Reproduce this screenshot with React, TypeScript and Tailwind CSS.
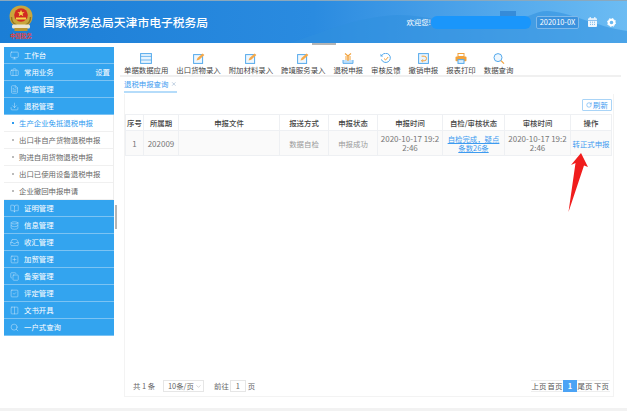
import { Monitor, Briefcase, FileText, Download, BookOpen, Database, Inbox, SquarePlus, Copy, SquareCheck, Columns2, Search, RotateCw, ChevronDown, X } from 'lucide-react';

const font = { fontFamily: '"Noto Sans CJK SC", "Liberation Sans", sans-serif' };

function Emblem() {
  return (
    <div className="flex w-[26px] flex-col items-center">
      <svg width="26" height="27" viewBox="0 0 26 27">
        <path d="M13 0.500c6.500 0 11.500 4.600 11.500 10.600 0 4.600-2 7.400-4.500 9.400H6c-2.500-2-4.500-4.800-4.500-9.400C1.500 5.100 6.500 0.500 13 0.500z" fill="#c9a63c" />
        <path d="M3.500 12c0 4 2.500 7 5 8M22.500 12c0 4-2.500 7-5 8" stroke="#8f7420" strokeWidth="1.400" fill="none" />
        <circle cx="13" cy="10" r="6.800" fill="#d22a22" />
        <path d="M13 4.800l1 2.500h2.600l-2.100 1.500.8 2.500-2.300-1.500-2.300 1.500.8-2.500-2.100-1.500H12z" fill="#f6d54a" />
        <rect x="8" y="12.500" width="10" height="2" fill="#f6d54a" />
        <rect x="4" y="19.500" width="18" height="4" rx="1.500" fill="#ece7d3" />
        <rect x="6.500" y="23" width="13" height="3" fill="#b9952f" />
      </svg>
      <span className="mt-[1px] whitespace-nowrap text-[5.500px] leading-[7px] font-bold text-[#e8413a]">中国税务</span>
    </div>
  );
}

function HeaderHills() {
  return (
    <svg className="absolute right-0 top-0 h-[43px] w-[340px]" viewBox="0 0 340 43" preserveAspectRatio="none">
      <path d="M0 43C40 30 70 16 110 14c40 0 60 14 90 12 30-2 45-16 60-16 20 0 50 16 80 20v13z" fill="#2f8fdf" opacity="0.55" />
      <rect x="213" y="10" width="16" height="10" fill="#2a7fd0" opacity="0.7" />
    </svg>
  );
}

function Header() {
  return (
    <div className="relative flex h-[43px] shrink-0 items-center overflow-hidden border-t border-[#8aa8bd] bg-gradient-to-r from-[#1b7ed6] via-[#2a8be0] to-[#6cbcf3]">
      <HeaderHills />
      <div className="relative ml-[8px] w-[35px]"><Emblem /></div>
      <div className="relative text-[11.800px] font-medium text-white">国家税务总局天津市电子税务局</div>
      <div className="relative ml-auto flex items-center pr-[11px]">
        <span className="text-[7.400px] text-white">欢迎您!</span>
        <div className="h-[13px] w-[100px] rounded-[6px] bg-[#1a96fb]" />
        <div className="ml-[5px] flex h-[13px] w-[43px] items-center justify-center rounded-[2px] border border-[#7fb9ea] bg-[#3a92de] text-[7.400px] text-white">202010-0X</div>
        <svg width="9" height="10" viewBox="0 0 9 10" className="ml-[9px]">
          <rect x="0" y="1.200" width="9" height="8.800" rx="1" fill="#eef6fd" />
          <path d="M2.200 0v2.400M6.800 0v2.400" stroke="#eef6fd" strokeWidth="1.200" />
          <path d="M0 3.400h9" stroke="#3a92de" strokeWidth="0.600" />
          <path d="M2 5.200h1M4 5.200h1M6 5.200h1M2 7.400h1M4 7.400h1M6 7.400h1" stroke="#6aaee6" strokeWidth="0.900" />
        </svg>
        <svg width="9" height="9" viewBox="0 0 9 9" className="ml-[10px]">
          <circle cx="4.500" cy="4.500" r="2.800" fill="none" stroke="#ffffff" strokeWidth="2" />
          <circle cx="4.500" cy="4.500" r="4.100" fill="none" stroke="#ffffff" strokeWidth="1" strokeDasharray="1.600 1.600" />
        </svg>
      </div>
    </div>
  );
}

const menuTop = [
  { icon: Monitor, label: '工作台' },
  { icon: Briefcase, label: '常用业务', extra: '设置' },
  { icon: FileText, label: '单据管理' },
  { icon: Download, label: '退税管理' },
];
const subItems = ['生产企业免抵退税申报', '出口非自产货物退税申报', '购进自用货物退税申报', '出口已使用设备退税申报', '企业撤回申报申请'];
const menuBottom = [
  { icon: BookOpen, label: '证明管理' },
  { icon: Database, label: '信息管理' },
  { icon: Inbox, label: '收汇管理' },
  { icon: SquarePlus, label: '加贸管理' },
  { icon: Copy, label: '备案管理' },
  { icon: SquareCheck, label: '评定管理' },
  { icon: Columns2, label: '文书开具' },
  { icon: Search, label: '一户式查询' },
];

function MenuRow({ icon: Icon, label, extra }: { icon: typeof Monitor; label: string; extra?: string }) {
  return (
    <div className="flex h-[17px] items-center border-b border-[#7cc3f3] bg-[#33a4ef] pl-[6px] pr-[4px] text-[7.400px] text-white">
      <Icon size={9} strokeWidth={1.200} className="text-[#d8eefc]" />
      <span className="ml-[5px]">{label}</span>
      {extra && <span className="ml-auto">{extra}</span>}
    </div>
  );
}

function Sidebar() {
  return (
    <div className="ml-[4px] mt-[4px] w-[110px] shrink-0">
      {menuTop.map((m) => <MenuRow key={m.label} {...m} />)}
      <div className="border-r border-[#eeeeee] bg-white">
        {subItems.map((s, i) => (
          <div key={s} className={`flex h-[17px] items-center border-b border-[#f0f0f0] pl-[8px] text-[7.400px] ${i === 0 ? 'text-[#2b9af0]' : 'text-[#666666]'}`}>
            <span className={`mr-[5px] h-[2px] w-[2px] ${i === 0 ? 'bg-[#2b9af0]' : 'bg-[#bbbbbb]'}`} />
            {s}
          </div>
        ))}
      </div>
      {menuBottom.map((m) => <MenuRow key={m.label} {...m} />)}
    </div>
  );
}

function ToolIcon({ kind }: { kind: number }) {
  if (kind === 0) return (
    <svg width="12" height="11" viewBox="0 0 12 11"><rect x="0.600" y="0.600" width="10.800" height="9.800" fill="#e8f4fe" stroke="#54a9ec" strokeWidth="1" /><path d="M0.600 3.400h10.800M0.600 7h10.800" stroke="#54a9ec" strokeWidth="0.800" /></svg>
  );
  if (kind === 1) return (
    <svg width="12" height="11" viewBox="0 0 12 11"><rect x="0.600" y="1.600" width="9" height="8.800" fill="#eef7fe" stroke="#54a9ec" strokeWidth="1" /><path d="M3.500 7.500l1-2.400L9.600 0.400l1.800 1.600-5.200 4.800z" fill="#f5a94a" /></svg>
  );
  if (kind === 2) return (
    <svg width="12" height="11" viewBox="0 0 12 11"><path d="M1 7v3.400h10V7" fill="#bfe0fa" stroke="#54a9ec" strokeWidth="0.900" /><path d="M3 0.500l3 2.500 3-2.500M3 4h6M3 6h6M6 3v5" stroke="#f2a23c" strokeWidth="1.100" fill="none" /></svg>
  );
  if (kind === 3) return (
    <svg width="12" height="11" viewBox="0 0 12 11"><path d="M2 2.200A4.600 4.600 0 1 1 1.400 6.400" stroke="#54a9ec" strokeWidth="1" fill="none" /><path d="M0.500 0.800v2.600h2.600" fill="#54a9ec" /><path d="M4 5.500l1.600 1.500L8.200 4" stroke="#f2a23c" strokeWidth="1" fill="none" /></svg>
  );
  if (kind === 4) return (
    <svg width="11" height="11" viewBox="0 0 11 11"><rect x="0.600" y="0.600" width="9.800" height="9.800" fill="#e8f4fe" stroke="#54a9ec" strokeWidth="1" /><path d="M3.600 3.200h2.600a2.200 2.200 0 0 1 0 4.600H3.600" stroke="#f2a23c" strokeWidth="1" fill="none" /><path d="M5 6.200L3.400 7.800 5 9.200" stroke="#f2a23c" strokeWidth="0.800" fill="none" /></svg>
  );
  if (kind === 5) return (
    <svg width="12" height="11" viewBox="0 0 12 11"><rect x="3" y="0.500" width="6" height="3" fill="#fff" stroke="#f2a23c" /><rect x="0.500" y="3.400" width="11" height="4.800" rx="1" fill="#f2a23c" /><rect x="3" y="6.600" width="6" height="3.800" fill="#d9eefd" stroke="#54a9ec" /></svg>
  );
  return (
    <svg width="12" height="11" viewBox="0 0 12 11"><circle cx="5" cy="4.600" r="4" fill="#eef7fe" stroke="#54a9ec" /><path d="M8 7.600l3 3" stroke="#f2a23c" strokeWidth="1.200" /></svg>
  );
}

const tools = [
  { label: '单据数据应用', kind: 0 },
  { label: '出口货物录入', kind: 1 },
  { label: '附加材料录入', kind: 1 },
  { label: '跨境服务录入', kind: 1 },
  { label: '退税申报', kind: 2 },
  { label: '审核反馈', kind: 3 },
  { label: '撤销申报', kind: 4 },
  { label: '报表打印', kind: 5 },
  { label: '数据查询', kind: 6 },
];

function Toolbar() {
  return (
    <div className="flex h-[34px] shrink-0 items-start gap-[8px] border-b-[2px] border-[#f0f0f0] pl-[4px] pt-[10px]">
      {tools.map((t) => (
        <div key={t.label} className="flex flex-col items-center">
          <ToolIcon kind={t.kind} />
          <span className="mt-[1px] whitespace-nowrap text-[7.400px] leading-[10px] text-[#444444]">{t.label}</span>
        </div>
      ))}
    </div>
  );
}

const cols = ['w-[18px]', 'w-[35px]', 'w-[101px]', 'w-[49px]', 'w-[49px]', 'w-[65px]', 'w-[62px]', 'w-[66px]', 'w-[41px]'];
const heads = ['序号', '所属期', '申报文件', '报送方式', '申报状态', '申报时间', '自检/审核状态', '审核时间', '操作'];

function ResultTable() {
  return (
    <table className="w-[486px] table-fixed border-collapse text-center text-[7.400px]">
      <colgroup>{cols.map((c, i) => <col key={i} className={c} />)}</colgroup>
      <thead>
        <tr className="h-[16px]">
          {heads.map((h) => <th key={h} className="border border-[#eef0f3] p-0 font-medium text-[#444444]">{h}</th>)}
        </tr>
      </thead>
      <tbody className="text-[#777777]">
        <tr className="h-[25px] bg-[#fafafa] leading-[9px]">
          <td className="border border-[#eef0f3] p-0 text-[8px]">1</td>
          <td className="border border-[#eef0f3] p-0 text-[8px]">202009</td>
          <td className="border border-[#eef0f3] p-0" />
          <td className="border border-[#eef0f3] p-0 text-[#999999]">数据自检</td>
          <td className="border border-[#eef0f3] p-0 text-[#999999]">申报成功</td>
          <td className="border border-[#eef0f3] p-0 whitespace-nowrap text-[8px]">2020-10-17 19:2<br />2:46</td>
          <td className="border border-[#eef0f3] p-0 text-[#3d9bf0] underline">自检完成，疑点<br />条数26条</td>
          <td className="border border-[#eef0f3] p-0 whitespace-nowrap text-[8px]">2020-10-17 19:2<br />2:46</td>
          <td className="border border-[#eef0f3] p-0 whitespace-nowrap text-[#3d9bf0]">转正式申报</td>
        </tr>
      </tbody>
    </table>
  );
}

function PageBtn({ label, className = '' }: { label: string; className?: string }) {
  return <span className={`flex h-[12px] items-center justify-center whitespace-nowrap border-y border-[#eeeeee] ${className}`}>{label}</span>;
}

function Pagination() {
  return (
    <div className="mt-auto flex h-[20px] items-center pl-[8px] pr-[3px] text-[7.400px] text-[#666666]">
      <span className="w-[24px] whitespace-pre">共 1 条</span>
      <div className="ml-[6px] flex h-[12px] w-[41px] items-center justify-between whitespace-nowrap border border-[#e6e6e6] pl-[4px] pr-[1px]">
        <span>10条/页</span>
        <ChevronDown size={7} className="text-[#bbbbbb]" />
      </div>
      <span className="ml-[10px]">前往</span>
      <div className="ml-[1px] flex h-[12px] w-[16px] items-center justify-center border border-[#e6e6e6]">1</div>
      <span className="ml-[2px]">页</span>
      <div className="ml-auto flex h-[12px] items-center text-[#555555]">
        <PageBtn label="上页" className="w-[16px]" />
        <PageBtn label="首页" className="w-[16px]" />
        <span className="flex h-[12px] w-[14px] items-center justify-center bg-[#4ba3f5] font-bold text-white">1</span>
        <PageBtn label="尾页" className="w-[16px]" />
        <PageBtn label="下页" className="w-[17px]" />
      </div>
    </div>
  );
}

function Main() {
  return (
    <div className="ml-[6px] flex min-w-0 flex-1 flex-col pr-[6px]">
      <Toolbar />
      <div className="flex h-[17px] shrink-0 items-start pl-[4px]">
        <div className="flex h-[16px] w-[53px] items-center gap-[3px] whitespace-nowrap border-b-[2px] border-[#b5dcfa] text-[7.400px] text-[#3d9bf0]">
          退税申报查询 <X size={6} className="text-[#7a9cc0]" />
        </div>
      </div>
      <div className="ml-[4px] mr-[7px] flex flex-1 flex-col border border-t-0 border-[#f3f3f3]">
        <div className="flex h-[20px] shrink-0 justify-end pr-[1px] pt-[5px]">
          <div className="flex h-[12px] w-[30px] items-center justify-center gap-[1px] rounded-[1px] border border-[#a9d4f7] text-[7.400px] text-[#3d9bf0]">
            <RotateCw size={6} />刷新
          </div>
        </div>
        <ResultTable />
        <Pagination />
      </div>
    </div>
  );
}

export default function App() {
  return (
    <div className="relative flex h-[411px] w-[627px] flex-col overflow-hidden bg-white" style={font}>
      <Header />
      <div className="flex h-[354px] shrink-0">
        <Sidebar />
        <Main />
      </div>
      <div className="mt-auto h-[3px] bg-[#f2f2f2]" />
      {/* splitters */}
      <div className="absolute left-[312px] top-[43px] h-[2px] w-[24px] bg-[#b5b5b5]" />
      <div className="absolute left-[115px] top-[205px] h-[24px] w-[2px] bg-[#b5b5b5]" />
      {/* red arrow annotation */}
      <svg className="absolute left-[560px] top-[150px] h-[65px] w-[30px]" viewBox="0 0 30 65">
        <path d="M21 3L28 17 24 15.500 8.500 62 15.500 13 11 15z" fill="#f01d1d" />
      </svg>
    </div>
  );
}
